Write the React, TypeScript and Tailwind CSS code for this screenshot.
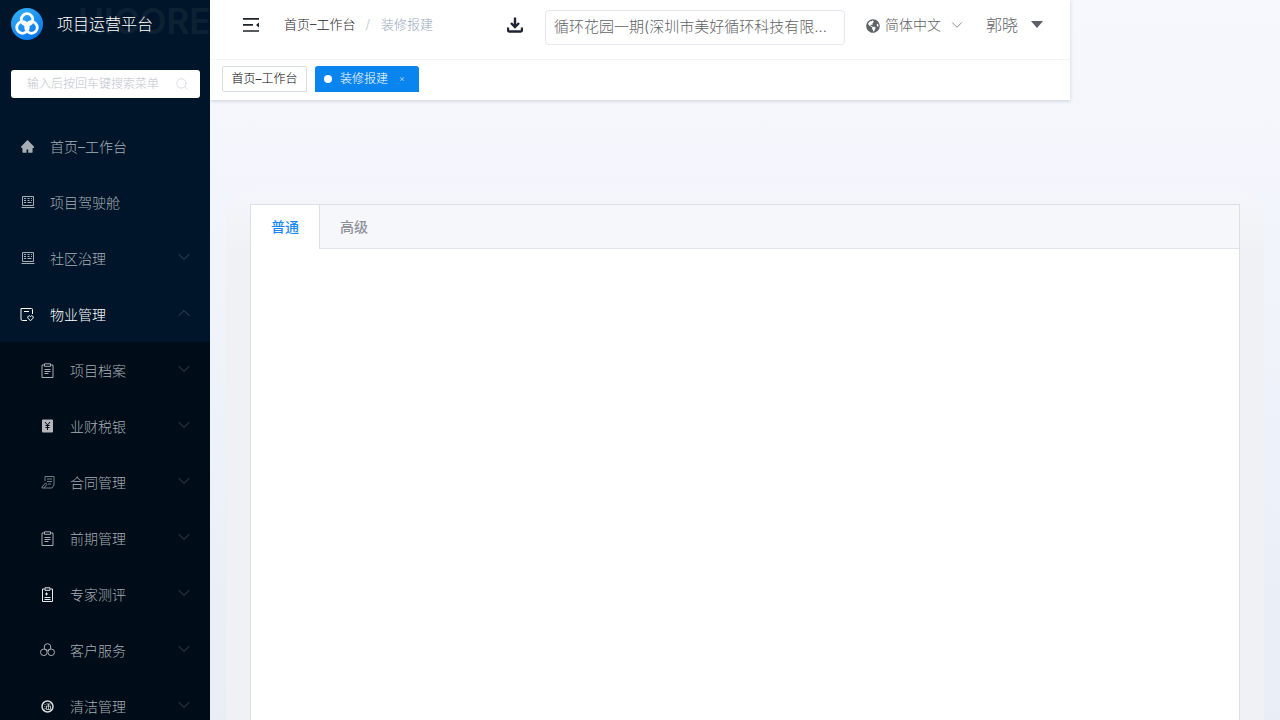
import React from 'react';
import { AiFillHome } from 'react-icons/ai';
import { FaGlobeAmericas } from 'react-icons/fa';
import { ChevronDown, ChevronUp, Search } from 'lucide-react';

const FONT = "font-['Inter','Noto_Sans_CJK_SC',sans-serif]";

function Logo() {
  return (
    <svg width="32" height="32" viewBox="0 0 32 32">
      <defs>
        <linearGradient id="lg" x1="0" y1="0" x2="0.6" y2="1">
          <stop offset="0" stopColor="#35b4f8" />
          <stop offset="1" stopColor="#0a78f0" />
        </linearGradient>
      </defs>
      <circle cx="16" cy="16" r="16" fill="url(#lg)" />
      <g fill="none" stroke="#fff" strokeWidth="2.8">
        <circle cx="16" cy="11.500" r="5.800" />
        <circle cx="11.500" cy="19.500" r="5.800" />
        <circle cx="20.500" cy="19.500" r="5.800" />
      </g>
    </svg>
  );
}

function ScreenIcon() {
  return (
    <svg width="14" height="14" viewBox="0 0 14 14" fill="none" stroke="currentColor">
      <path d="M1.500 1.500h11v9h-11z" />
      <path d="M0.500 12.500h13" />
      <path d="M3 3.500h2M3 5.500h2M3 7.500h2M6.500 3.500h2M6.500 5.500h2M6.500 7.500h4M10 3.500h1M10 5.500h1" strokeWidth="1" />
    </svg>
  );
}

function PropertyIcon() {
  return (
    <svg width="15" height="15" viewBox="0 0 15 15" fill="none" stroke="currentColor">
      <path d="M7 13.500H2.500a1.500 1.500 0 0 1-1.500-1.500V1.500h10.500a1 1 0 0 1 1 1V7" />
      <path d="M4 4.500h5" />
      <path d="M10.500 13.800l-2.500-2.600a1.500 1.500 0 0 1 2.500-1.700 1.500 1.500 0 0 1 2.500 1.700z" />
    </svg>
  );
}

function ClipboardIcon() {
  return (
    <svg width="13" height="15" viewBox="0 0 13 15" fill="none" stroke="currentColor">
      <path d="M3.500 2H1v12.500h11V2H9.500" />
      <path d="M3.500 .8h6v2.500h-6z" />
      <path d="M3.500 6.500h6M3.500 8.500h6M3.500 10.500h4" />
    </svg>
  );
}

function YuanIcon() {
  return (
    <svg width="13" height="14" viewBox="0 0 13 14">
      <path d="M1 1.500a1 1 0 0 1 1-1h9a1 1 0 0 1 1 1v11a1 1 0 0 1-1 1H2a1 1 0 0 1-1-1z" fill="#b4b6b9" />
      <path d="M4 3l2.500 3L9 3M6.500 6v5M4.500 6.500h4M4.500 8.500h4" stroke="#000c17" fill="none" />
    </svg>
  );
}

function ContractIcon() {
  return (
    <svg width="14" height="14" viewBox="0 0 14 14" fill="none" stroke="currentColor" opacity="0.7">
      <path d="M4 6V1.500h9V10l-2 3H3" />
      <path d="M6 4h5M6 6.500h5M7 9h3" />
      <path d="M1 12l3.500-4 1.500 1.300L3 13H1z" />
    </svg>
  );
}

function ExpertIcon() {
  return (
    <svg width="13" height="15" viewBox="0 0 13 15" fill="none" stroke="#e8e9ea">
      <path d="M3.500 2H1.500v12.500h10V2H9.500" />
      <path d="M4 .8h5v2.500H4z" />
      <path d="M4 7h3M5.500 5.500v3M3.500 10.500h6M3.500 12.500h6" />
    </svg>
  );
}

function RecycleIcon() {
  return (
    <svg width="15" height="14" viewBox="0 0 15 14" fill="none" stroke="currentColor">
      <circle cx="7.500" cy="4" r="3.300" />
      <circle cx="3.800" cy="9.300" r="3.300" />
      <circle cx="11.200" cy="9.300" r="3.300" />
    </svg>
  );
}

function CleanIcon() {
  return (
    <svg width="13" height="13" viewBox="0 0 13 13" fill="none" stroke="#d8d9da">
      <circle cx="6.500" cy="6.500" r="5.500" strokeWidth="1.500" />
      <path d="M3.500 4l1 1M3.500 6.500l1 .5M3.500 9.500l1-1.500M5.500 4h4M7.500 4v5M5.500 6h4v3.500h-4z" strokeWidth="0.800" />
    </svg>
  );
}

type MenuRow = { label: string; icon: React.ReactNode; arrow?: 'up' | 'down'; active?: boolean };

const topMenu: MenuRow[] = [
  { label: '首页–工作台', icon: <AiFillHome size={17} /> },
  { label: '项目驾驶舱', icon: <ScreenIcon /> },
  { label: '社区治理', icon: <ScreenIcon />, arrow: 'down' },
  { label: '物业管理', icon: <PropertyIcon />, arrow: 'up', active: true },
];

const subMenu: MenuRow[] = [
  { label: '项目档案', icon: <ClipboardIcon />, arrow: 'down' },
  { label: '业财税银', icon: <YuanIcon />, arrow: 'down' },
  { label: '合同管理', icon: <ContractIcon />, arrow: 'down' },
  { label: '前期管理', icon: <ClipboardIcon />, arrow: 'down' },
  { label: '专家测评', icon: <ExpertIcon />, arrow: 'down' },
  { label: '客户服务', icon: <RecycleIcon />, arrow: 'down' },
  { label: '清洁管理', icon: <CleanIcon />, arrow: 'down' },
];

function SideRow({ row, indent }: { row: MenuRow; indent?: boolean }) {
  return (
    <div
      className={`flex h-14 shrink-0 items-center pr-[16px] text-sm font-light ${indent ? 'pl-10' : 'pl-5'} ${
        row.active ? 'text-white' : 'text-[#a6adb4]'
      }`}
    >
      <span className="flex w-[15px] justify-center -translate-y-px">{row.icon}</span>
      <span className="ml-[15px] flex-1">{row.label}</span>
      {row.arrow === 'down' && <ChevronDown size={20} strokeWidth={0.7} className="-translate-y-0.5 text-[#6f767e]" />}
      {row.arrow === 'up' && <ChevronUp size={20} strokeWidth={0.7} className="-translate-y-0.5 text-[#6f767e]" />}
    </div>
  );
}

function Sidebar() {
  return (
    <aside className="relative h-full w-[210px] shrink-0 overflow-hidden bg-[#001529]">
      <span className="absolute left-[78px] top-0 whitespace-nowrap text-[35px] font-semibold leading-[42px] text-white/[0.05]">
        HICORE
      </span>
      <div className="relative flex h-[48px] items-center pl-[11px] text-white">
        <Logo />
        <span className="ml-[14px] text-base font-light">项目运营平台</span>
      </div>
      <div className="relative ml-[11px] mt-[22px] flex h-7 w-[189px] items-center rounded-[3px] bg-white pl-4 pr-[11px] text-xs font-light text-[#c0c4cc]">
        <span className="flex-1">输入后按回车键搜索菜单</span>
        <Search size={14} strokeWidth={1} />
      </div>
      <div className="mt-[21px]">
        {topMenu.map(row => (
          <SideRow key={row.label} row={row} />
        ))}
      </div>
      <div className="-mt-px bg-[#000c17] pt-px">
        {subMenu.map(row => (
          <SideRow key={row.label} row={row} indent />
        ))}
      </div>
    </aside>
  );
}

function Header() {
  return (
    <header className="w-[860px] shrink-0 bg-white shadow-[0_1px_4px_rgba(0,21,41,0.16)]">
      <div className="flex h-[60px] items-center border-b border-[#f3f4f6] pb-[10px] font-light">
        <svg width="16" height="14" viewBox="0 0 16 14" className="ml-[33px]" fill="none" stroke="#1f2329" strokeWidth="1.700">
          <path d="M0 .8h16M0 6.800h10M0 13h16" />
          <path d="M16 4.500v5l-3-2.500z" fill="#1f2329" stroke="none" />
        </svg>
        <span className="ml-[25px] text-[13px] text-[#1f2329]">首页–工作台</span>
        <span className="ml-[10px] text-[13px] text-[#c0c4cc]">/</span>
        <span className="ml-[11px] w-[126px] text-[13px] text-[#97a8be]">装修报建</span>
        <svg width="16" height="16" viewBox="0 0 16 16" fill="none" stroke="#1f2333" strokeWidth="2.400">
          <path d="M8 0.500v8.500" />
          <path d="M4 6l4 4 4-4" />
          <path d="M1 10.500v2.500a1.500 1.500 0 0 0 1.500 1.500h11a1.500 1.500 0 0 0 1.500-1.500v-2.500" />
        </svg>
        <div className="ml-[22px] mt-[6px] flex h-[35px] w-[300px] shrink-0 items-center rounded border border-[#e4e7ed] pl-2 pr-3 text-[15px] text-[#606266]">
          <span className="truncate">循环花园一期(深圳市美好循环科技有限公司)项目</span>
        </div>
        <FaGlobeAmericas size={14} className="ml-[21px] mt-[2px] shrink-0 text-[#5f6368]" />
        <span className="ml-[5px] text-sm text-[#606266]">简体中文</span>
        <ChevronDown size={18} strokeWidth={1} className="ml-[7px] text-[#606266]" />
        <span className="ml-[20px] text-base text-[#606266]">郭晓</span>
        <span className="ml-[13px] h-0 w-0 border-x-[6px] border-t-[7px] border-x-transparent border-t-[#5a5e66]" />
      </div>
      <div className="flex h-[40px] items-start gap-2 pl-3 pt-[6px] text-xs font-light">
        <span className="flex h-[26px] w-[85px] items-center justify-center rounded-[2px] border border-[#d8dce5] text-black">首页–工作台</span>
        <span className="flex h-[26px] w-[104px] items-center rounded-t-[3px] bg-[#0a84ef] pl-[9px] text-white">
          <span className="h-2 w-2 rounded-full bg-white" />
          <span className="ml-2">装修报建</span>
          <span className="ml-[11px] text-[9px] opacity-70">×</span>
        </span>
      </div>
    </header>
  );
}

function TabsCard() {
  return (
    <div className="ml-4 mr-4 mt-[90px] min-h-0 flex-1 overflow-hidden rounded-t-[28px] bg-gradient-to-b from-[#f4f6fb] to-[#eff1f5] to-[12%] px-6 pt-[14px]">
      <div className="h-[600px] border border-[#dcdfe6] bg-white">
        <div className="flex h-[44px] border-b border-[#dfe4ed] bg-[#f5f7fa] text-sm">
          <div className="-mb-px flex h-[44px] w-[69px] items-center justify-center border-r border-[#dcdfe6] bg-white font-medium text-[#1989fa]">
            普通
          </div>
          <div className="flex items-center px-5 font-medium text-[#909399]">高级</div>
        </div>
      </div>
    </div>
  );
}

export default function App() {
  return (
    <div className={`flex h-[720px] w-[1280px] overflow-hidden ${FONT}`}>
      <Sidebar />
      <main className="flex min-w-0 flex-1 flex-col bg-gradient-to-b from-[#f6f8fd] to-[#e8edf6]">
        <Header />
        <TabsCard />
      </main>
    </div>
  );
}
